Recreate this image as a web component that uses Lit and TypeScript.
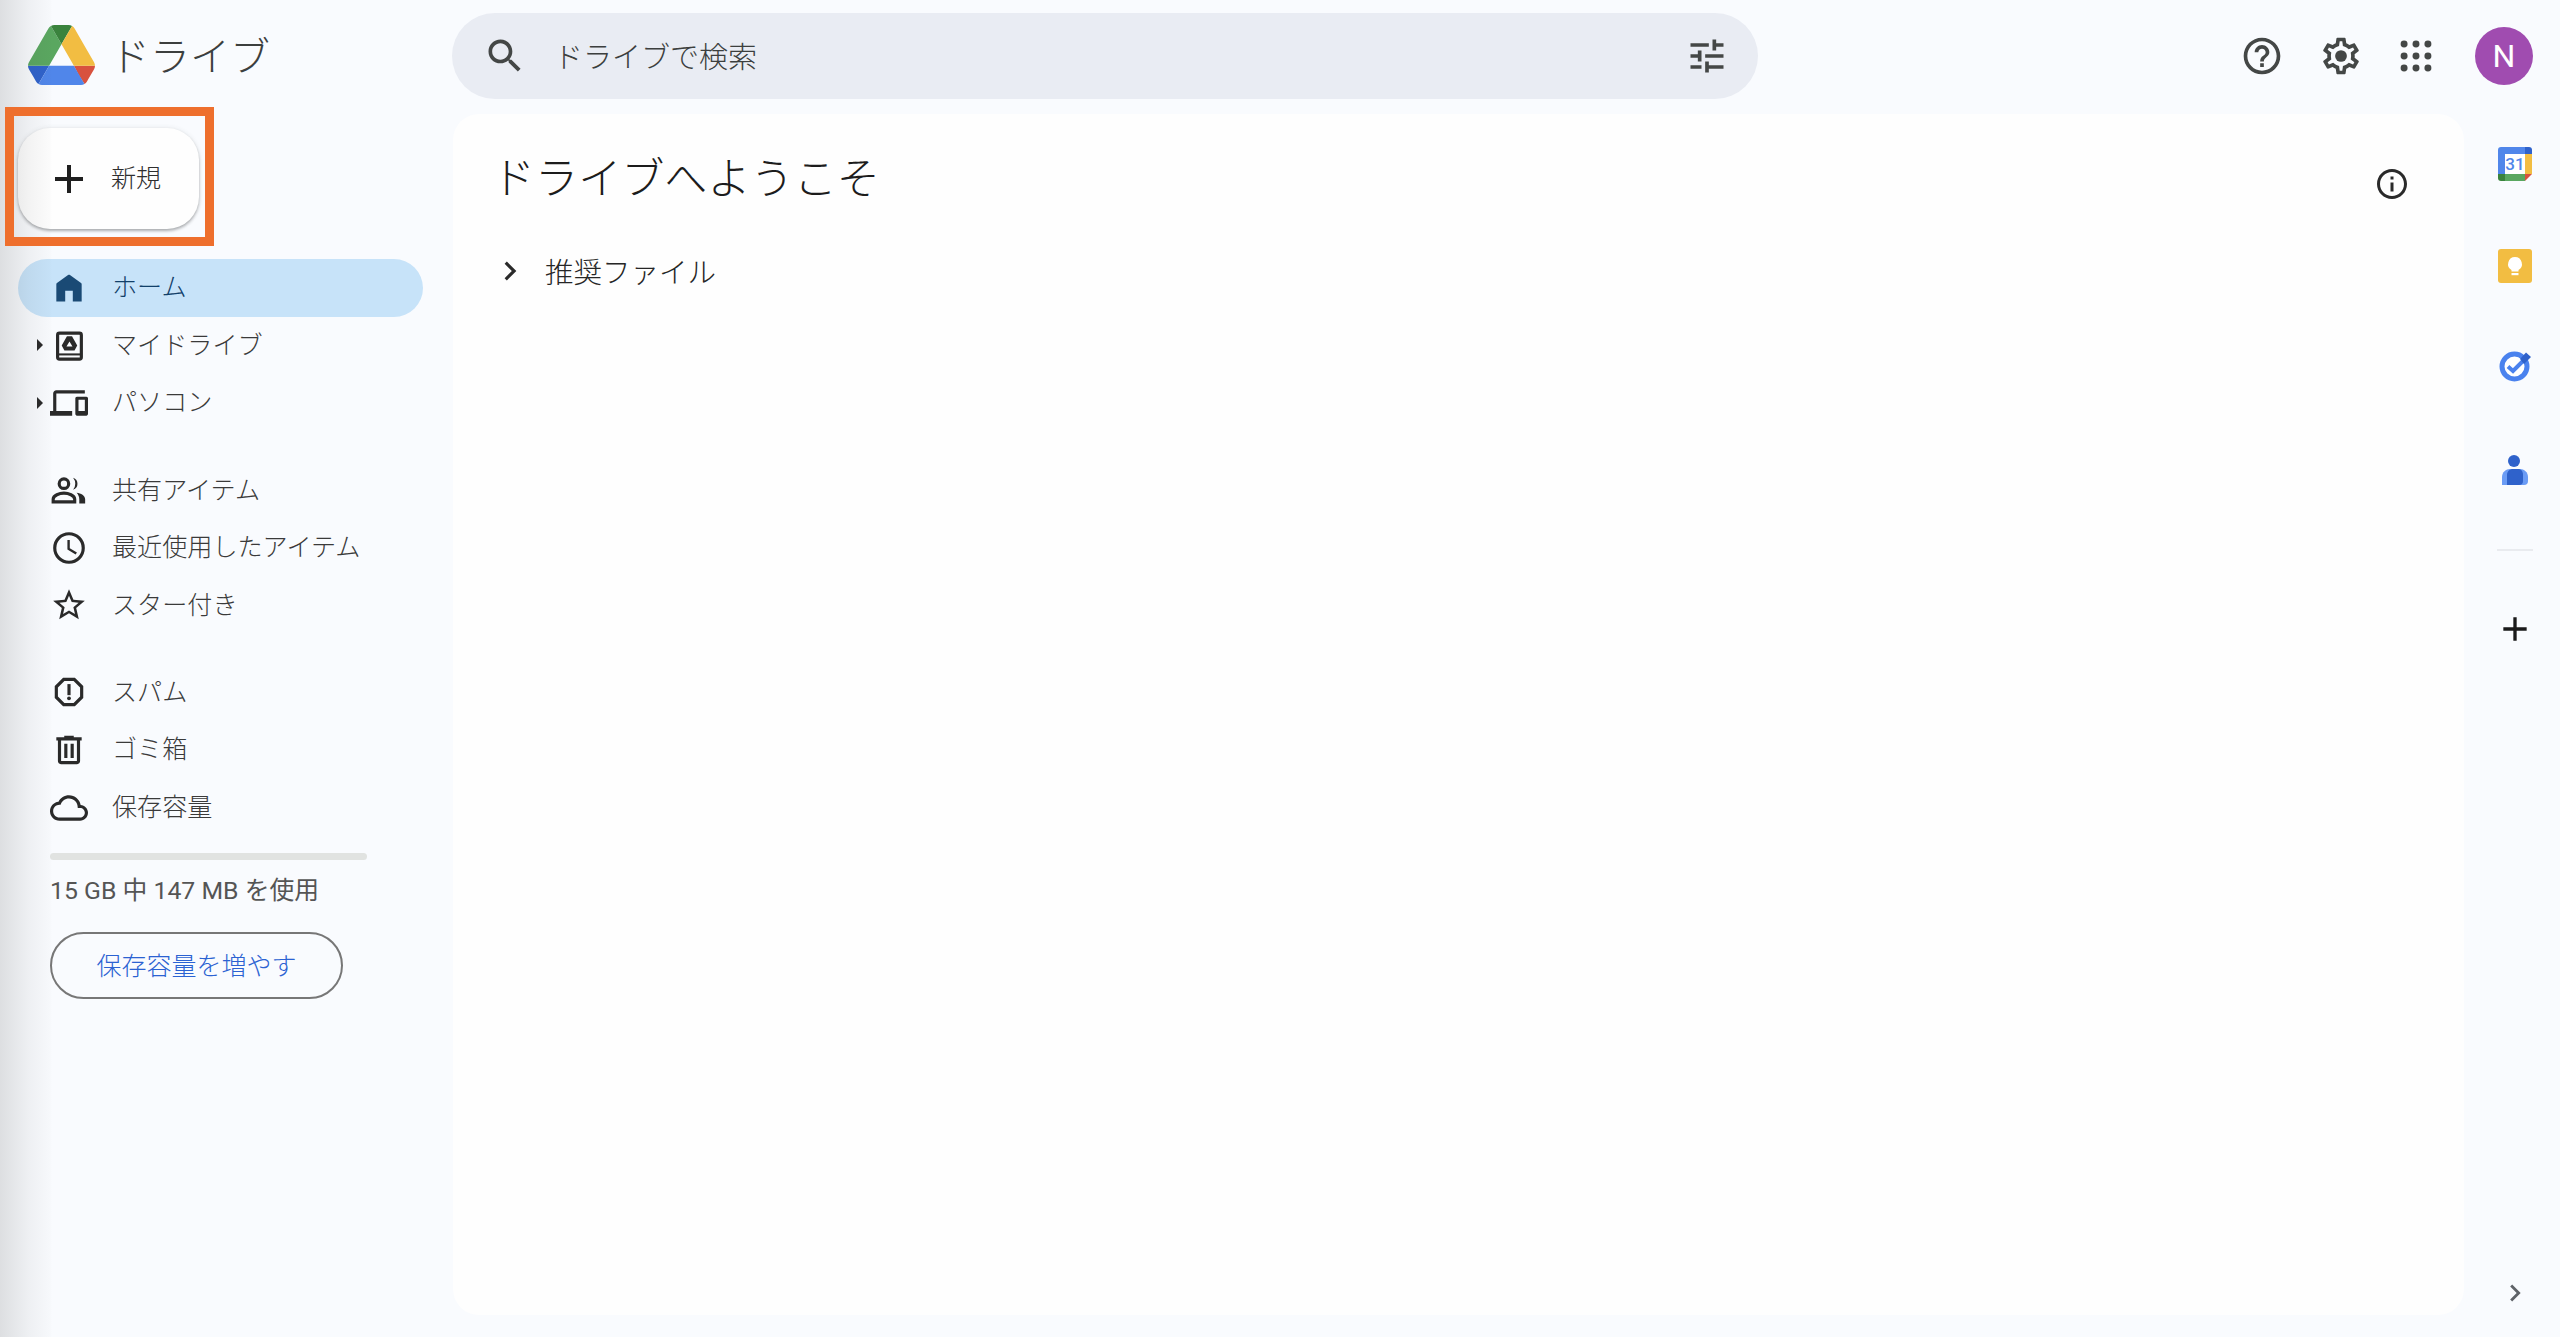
import { LitElement, html, css, svg } from "lit";
import { customElement } from "lit/decorators.js";

const ICONS: Record<string, unknown> = {
  home: svg`<path d="M4 20.500V9.600c0-.3.1-.6.4-.8l7-5c.4-.3.9-.3 1.200 0l7 5c.3.2.4.5.4.8v10.900h-5.600v-6.700H9.600v6.700z"/>`,
  drive: svg`<rect x="4.800" y="4.500" width="15" height="16.400" rx="1.200" fill="none" stroke="currentColor" stroke-width="2"/><path d="M5 17.300h14.500v1.300H5z"/><path fill-rule="evenodd" d="M10.700 6.500h3.200l3.300 5.800-1.700 3.100H9.100l-1.700-3.100zM12.300 9.800l-1.900 3.200h3.800z"/>`,
  devices: svg`<path d="M4 6h18V4H4c-1.100 0-2 .9-2 2v11H0v3h14v-3H4V6zm19 2h-6c-.55 0-1 .45-1 1v10c0 .55.45 1 1 1h6c.55 0 1-.45 1-1V9c0-.55-.45-1-1-1zm-1 9h-4v-7h4v7z"/>`,
  people: svg`<circle cx="8.800" cy="8" r="3" fill="none" stroke="currentColor" stroke-width="2"/><path d="M2 19.500v-1.700c0-2.400 4-3.800 6.800-3.800s6.800 1.400 6.800 3.800v1.700z" fill="none" stroke="currentColor" stroke-width="2"/><path d="M14.600 4.200a4 4 0 0 1 0 7.600 6 6 0 0 0 0-7.600zM16.800 13.700c2.800.4 5.400 1.700 5.400 4.100v2.700h-3.700v-2.700c0-1.700-.7-3-1.700-4.100z"/>`,
  clock: svg`<path d="M12 2a10 10 0 1 0 0 20 10 10 0 0 0 0-20zm0 18a8 8 0 1 1 0-16 8 8 0 0 1 0 16z"/><path d="M12.500 7H11v6l5.200 3.100.8-1.200-4.500-2.700z"/>`,
  star: svg`<path d="M22 9.240l-7.190-.62L12 2 9.190 8.630 2 9.240l5.460 4.730L5.820 21 12 17.270 18.180 21l-1.630-7.030L22 9.240zM12 15.400l-3.760 2.270 1-4.280-3.320-2.880 4.380-.38L12 6.100l1.710 4.040 4.380.38-3.320 2.880 1 4.280L12 15.400z"/>`,
  spam: svg`<path d="M15.730 3H8.270L3 8.270v7.460L8.270 21h7.460L21 15.730V8.270L15.730 3zM19 14.900L14.900 19H9.100L5 14.900V9.100L9.100 5h5.800L19 9.100v5.800z"/><circle cx="12" cy="16" r="1.200"/><path d="M11 7h2v7h-2z"/>`,
  trash: svg`<path d="M15 4V3H9v1H4v2h1v13c0 1.100.9 2 2 2h10c1.100 0 2-.9 2-2V6h1V4h-5zm2 15H7V6h10v13zM9 8h2v9H9zm4 0h2v9h-2z"/>`,
  cloud: svg`<path d="M19.350 10.040C18.670 6.590 15.640 4 12 4 9.110 4 6.600 5.640 5.350 8.040 2.340 8.360 0 10.910 0 14c0 3.310 2.690 6 6 6h13c2.760 0 5-2.240 5-5 0-2.640-2.050-4.780-4.650-4.960zM19 18H6c-2.210 0-4-1.790-4-4s1.790-4 4-4h.71C7.370 7.690 9.480 6 12 6c3.040 0 5.500 2.460 5.500 5.500v.5H19c1.660 0 3 1.340 3 3s-1.340 3-3 3z"/>`,
  search: svg`<path d="M15.500 14h-.79l-.28-.27C15.410 12.590 16 11.110 16 9.500 16 5.910 13.090 3 9.500 3S3 5.910 3 9.500 5.910 16 9.500 16c1.610 0 3.090-.59 4.230-1.570l.27.28v.79l5 4.990L20.490 19l-4.990-5zm-6 0C7.010 14 5 11.990 5 9.500S7.010 5 9.500 5 14 7.010 14 9.500 11.990 14 9.500 14z"/>`,
  tune: svg`<path d="M3 17v2h6v-2H3zM3 5v2h10V5H3zm10 16v-2h8v-2h-8v-2h-2v6h2zM7 9v2H3v2h4v2h2V9H7zm14 4v-2H11v2h10zm-6-4h2V7h4V5h-4V3h-2v6z"/>`,
  help: svg`<path d="M11 18h2v-2h-2v2zm1-16C6.480 2 2 6.480 2 12s4.480 10 10 10 10-4.480 10-10S17.520 2 12 2zm0 18c-4.410 0-8-3.590-8-8s3.590-8 8-8 8 3.590 8 8-3.590 8-8 8zm0-14c-2.210 0-4 1.790-4 4h2c0-1.100.9-2 2-2s2 .9 2 2c0 2-3 1.750-3 5h2c0-2.250 3-2.500 3-5 0-2.210-1.790-4-4-4z"/>`,
  settings: svg`<path d="M19.430 12.980c.04-.32.07-.64.07-.98 0-.34-.03-.66-.07-.98l2.110-1.650c.19-.15.24-.42.12-.64l-2-3.460c-.09-.16-.26-.25-.44-.25-.06 0-.12.01-.17.03l-2.490 1c-.52-.4-1.080-.73-1.690-.98l-.38-2.650C14.460 2.180 14.250 2 14 2h-4c-.25 0-.46.18-.49.42l-.38 2.650c-.61.25-1.170.59-1.690.98l-2.490-1c-.06-.02-.12-.03-.18-.03-.17 0-.34.09-.43.25l-2 3.460c-.13.22-.07.49.12.64l2.110 1.650c-.04.32-.07.65-.07.98 0 .33.03.66.07.98l-2.110 1.650c-.19.15-.24.42-.12.64l2 3.460c.09.16.26.25.44.25.06 0 .12-.01.17-.03l2.490-1c.52.4 1.080.73 1.690.98l.38 2.650c.03.24.24.42.49.42h4c.25 0 .46-.18.49-.42l.38-2.650c.61-.25 1.170-.59 1.690-.98l2.490 1c.06.02.12.03.18.03.17 0 .34-.09.43-.25l2-3.460c.12-.22.07-.49-.12-.64l-2.110-1.650zm-1.980-1.710c.04.31.05.52.05.73 0 .21-.02.43-.05.73l-.14 1.130.89.7 1.080.84-.7 1.210-1.270-.51-1.040-.42-.9.68c-.43.32-.84.56-1.250.73l-1.060.43-.16 1.130-.2 1.350h-1.400l-.19-1.350-.16-1.130-1.060-.43c-.43-.18-.83-.41-1.230-.71l-.91-.7-1.060.43-1.270.51-.7-1.210 1.080-.84.89-.7-.14-1.130c-.03-.31-.05-.54-.05-.74s.02-.43.05-.73l.14-1.130-.89-.7-1.080-.84.7-1.210 1.270.51 1.040.42.9-.68c.43-.32.84-.56 1.250-.73l1.060-.43.16-1.130.2-1.350h1.390l.19 1.350.16 1.130 1.060.43c.43.18.83.41 1.230.71l.91.7 1.060-.43 1.270-.51.7 1.210-1.070.85-.89.7.14 1.130z"/><circle cx="12" cy="12" r="3.200"/>`,
  apps: svg`<circle cx="5.500" cy="5.500" r="1.900"/><circle cx="12" cy="5.500" r="1.900"/><circle cx="18.500" cy="5.500" r="1.900"/><circle cx="5.500" cy="12" r="1.900"/><circle cx="12" cy="12" r="1.900"/><circle cx="18.500" cy="12" r="1.900"/><circle cx="5.500" cy="18.500" r="1.900"/><circle cx="12" cy="18.500" r="1.900"/><circle cx="18.500" cy="18.500" r="1.900"/>`,
  info: svg`<path d="M11 7h2v2h-2zm0 4h2v6h-2zm1-9C6.480 2 2 6.480 2 12s4.480 10 10 10 10-4.480 10-10S17.520 2 12 2zm0 18c-4.410 0-8-3.590-8-8s3.590-8 8-8 8 3.590 8 8-3.590 8-8 8z"/>`,
  chevron: svg`<path d="M8.590 16.590L13.170 12 8.590 7.410 10 6l6 6-6 6z"/>`,
  plus: svg`<path d="M19 13h-6v6h-2v-6H5v-2h6V5h2v6h6z"/>`,
};

const icon = (name: string, cls = "") =>
  html`<svg class="ic ${cls}" viewBox="0 0 24 24" fill="currentColor">${ICONS[name]}</svg>`;

const driveLogo = html`<svg class="logo" viewBox="0 0 87.3 78">
  <path d="m6.600 66.850 3.850 6.650c.8 1.400 1.950 2.500 3.300 3.300l13.750-23.800h-27.500c0 1.550.4 3.100 1.200 4.500z" fill="#2f62cb"/>
  <path d="m43.650 25-13.750-23.800c-1.350.8-2.500 1.900-3.300 3.300l-25.400 44a9.060 9.060 0 0 0 -1.200 4.500h27.500z" fill="#5aa760"/>
  <path d="m73.550 76.800c1.350-.8 2.500-1.900 3.300-3.300l1.600-2.750 7.650-13.250c.8-1.400 1.200-2.950 1.200-4.500h-27.502l5.852 11.500z" fill="#d8523f"/>
  <path d="m43.650 25 13.750-23.800c-1.350-.8-2.900-1.200-4.500-1.200h-18.500c-1.600 0-3.150.45-4.500 1.200z" fill="#3a833d"/>
  <path d="m59.800 53h-32.300l-13.750 23.800c1.350.8 2.900 1.200 4.500 1.200h50.800c1.600 0 3.150-.45 4.500-1.200z" fill="#5086ea"/>
  <path d="m73.400 26.500-12.700-22c-.8-1.400-1.950-2.500-3.300-3.300l-13.750 23.800 16.150 28h27.450c0-1.550-.4-3.100-1.200-4.500z" fill="#f2bd42"/>
</svg>`;

const calendar = html`<svg class="addon" viewBox="0 0 34 34">
  <path d="M3 0h25v7H7v20H0V3a3 3 0 0 1 3-3z" fill="#5086ea"/>
  <path d="M27 0h4a3 3 0 0 1 3 3v4h-7z" fill="#2f62cb"/>
  <path d="M27 7h7v20h-7z" fill="#f2bd42"/>
  <path d="M7 27h20v7H7z" fill="#5aa760"/>
  <path d="M0 27h7v7H3a3 3 0 0 1-3-3z" fill="#3a833d"/>
  <path d="M27 27h7l-7 7z" fill="#d8523f"/>
  <path d="M7 7h20v20H7z" fill="#fff"/>
  <text x="17" y="23" text-anchor="middle" class="cal">31</text>
</svg>`;

const keep = html`<svg class="addon" viewBox="0 0 34 34">
  <rect width="34" height="34" rx="3" fill="#f2bd42"/>
  <path d="M17 8a7 7 0 0 1 3.500 13v1.500h-7V21A7 7 0 0 1 17 8z" fill="#fff"/>
  <path d="M13.500 24h7v2.200h-7z" fill="#fff"/>
</svg>`;

const tasks = html`<svg class="addon" viewBox="0 0 34 34">
  <circle cx="16.500" cy="15.500" r="12.500" fill="#fff" stroke="#4a82ee" stroke-width="5"/>
  <path d="M10 15.500l5 4.500L26 9" fill="none" stroke="#4a82ee" stroke-width="4"/>
  <path d="M22 8l6-6.500 5 4.500-7 7z" fill="#2f62cb"/>
</svg>`;

const contacts = html`<svg class="addon" viewBox="0 0 34 34">
  <circle cx="16" cy="8" r="6" fill="#2f62cb"/>
  <path d="M4 32v-8c0-5 4-8 8-8h10c4 0 8 3 8 8v4a4 4 0 0 1-4 4z" fill="#6b9cf5"/>
  <path d="M9 32V22c0-4 3-6 6-6h5c3 0 5 2 5 6v6a4 4 0 0 1-4 4z" fill="#2f62cb"/>
</svg>`;

type Row = { label: string; ic: string; caret?: boolean; active?: boolean };
const sections: Row[][] = [
  [
    { label: "ホーム", ic: "home", active: true },
    { label: "マイドライブ", ic: "drive", caret: true },
    { label: "パソコン", ic: "devices", caret: true },
  ],
  [
    { label: "共有アイテム", ic: "people" },
    { label: "最近使用したアイテム", ic: "clock" },
    { label: "スター付き", ic: "star" },
  ],
  [
    { label: "スパム", ic: "spam" },
    { label: "ゴミ箱", ic: "trash" },
    { label: "保存容量", ic: "cloud" },
  ],
];

@customElement("app-root")
export class AppRoot extends LitElement {
  static styles = css`
    :host {
      display: block;
      position: relative;
      width: 2560px;
      height: 1337px;
      overflow: hidden;
      background: #f9fbfe;
      color: #3a3a3a;
      font-family: Roboto, "Noto Sans CJK JP", sans-serif;
      font-size: 25.100px;
      font-weight: 300;
    }
    .ic { width: 38px; height: 38px; display: block; flex: none; }
    .shade {
      position: absolute; left: 0; top: 0; bottom: 0; width: 52px; z-index: 1;
      pointer-events: none;
      background: linear-gradient(to right, rgba(60,60,60,.15), rgba(60,60,60,.06) 55%, rgba(60,60,60,.015) 95%, transparent);
    }
    .mark {
      position: absolute; left: 5px; top: 107px; width: 209px; height: 139px; z-index: 2;
      box-sizing: border-box; border: 9px solid #ee6f2d; pointer-events: none;
    }
    header { display: grid; grid-template-columns: 452px 1306px 1fr; height: 107px; }
    .brand { display: flex; align-items: center; padding: 2px 0 0 28px; gap: 15px; height: 107px; box-sizing: border-box; }
    .logo { width: 67px; height: 60px; display: block; }
    .brand span { font-size: 40px; color: #3c3f3e; line-height: 1; padding-top: 6px; }
    .search {
      margin-top: 13px; height: 86px; border-radius: 43px; background: #e9ecf3; color: #444746;
      display: flex; align-items: center; padding: 0 29px 0 31px; gap: 27px; box-sizing: border-box;
    }
    .search .ic { width: 44px; height: 44px; }
    .search span { flex: 1; font-size: 29px; color: #3c3f3e; padding-bottom: 2px; }
    .tools { display: flex; align-items: center; justify-content: flex-end; padding: 13px 27px 0 0; height: 86px; color: #444746; }
    .tools .ic { width: 44px; height: 44px; margin-right: 35px; }
    .tools .ic.last { margin-right: 37px; }
    .tools .ic.gear { margin-right: 31px; margin-left: 0; }
    .avatar {
      width: 58px; height: 58px; border-radius: 50%; background: #a04cb0; color: #fff;
      display: flex; align-items: center; justify-content: center; font-size: 32px; font-weight: 400;
    }
    .body { display: grid; grid-template-columns: 453px 2011px 96px; height: 1230px; }
    nav { padding-top: 21px; }
    .new {
      margin-left: 18px; width: 181px; height: 101px; border-radius: 32px; background: #fefefe;
      box-shadow: 0 2px 3px rgba(60,64,67,.38), 0 0 5px rgba(60,64,67,.1);
      display: flex; align-items: center; gap: 17px; padding-left: 32px; box-sizing: border-box; color: #1f1f1f;
    }
    .new .ic { width: 48px; height: 48px; margin-left: -5px; }
    .new span { color: #2f2f2f; margin-left: 1px; padding-bottom: 5px; }
    .sec { margin-top: 29.500px; }
    .sec.first { margin-top: 30px; }
    .row {
      display: flex; align-items: center; height: 57.600px; width: 405px; margin-left: 18px;
      border-radius: 29px; color: #3a3a3a;
    }
    .row.on { background: #c7e3f9; color: #12406a; }
    .row .ic { color: #2a2a2a; margin-left: 1px; margin-right: -1px; }
    .row.on .ic { color: #1a4a75; }
    .slot { width: 31px; flex: none; padding-left: 19px; box-sizing: border-box; display: flex; }
    .caret { width: 0; height: 0; border-left: 6px solid #2a2a2a; border-top: 6px solid transparent; border-bottom: 6px solid transparent; }
    .row span { margin-left: 25px; padding-bottom: 5px; }
    .bar { margin: 16.500px 0 0 50px; width: 317px; height: 7px; border-radius: 4px; background: #e1e3e1; }
    .used { margin: 16.500px 0 0 50px; line-height: 30px; color: #555; font-weight: 400; font-size: 24.800px; }
    .more {
      margin: 26px 0 0 50px; width: 293px; height: 67px; border-radius: 34px; border: 2px solid #777;
      box-sizing: border-box; display: flex; align-items: center; justify-content: center; color: #2b62d2; font-size: 25px;
      padding-bottom: 4px;
    }
    main { margin: 7px 0 22px; background: #fefefe; border-radius: 26px; }
    .head { display: flex; justify-content: space-between; padding: 41px 54px 0 39px; height: 50px; }
    .head h1 { margin: 0; font-weight: 300; font-size: 43.100px; line-height: 50px; color: #1c1c1c; }
    .head .ic { width: 36px; height: 36px; margin-top: 11px; color: #2a2a2a; }
    .rec { display: flex; align-items: center; margin: 40.500px 0 0 38px; height: 50px; gap: 16px; font-size: 28.500px; color: #262626; }
    .rec .ic { color: #2a2a2a; }
    .rail { display: flex; flex-direction: column; align-items: center; padding: 6px 0 27px 5px; }
    .slot2 { height: 102px; display: flex; align-items: center; justify-content: center; flex: none; }
    .addon { width: 34px; height: 34px; display: block; }
    .cal { font: 500 17px Roboto, sans-serif; fill: #5086ea; }
    .div { width: 36px; height: 2px; background: #e9ebef; margin: 27.500px 0 0; }
    .add { margin-top: 27.500px; color: #1a1a1a; }
    .add .ic { width: 40px; height: 40px; }
    .foot { margin-top: auto; color: #5f6368; }
    .foot .ic { width: 34px; height: 34px; }
  `;

  render() {
    return html`
      <div class="shade"></div>
      <div class="mark"></div>
      <header>
        <div class="brand">${driveLogo}<span>ドライブ</span></div>
        <div class="search">
          ${icon("search")}
          <span>ドライブで検索</span>
          ${icon("tune")}
        </div>
        <div class="tools">
          ${icon("help")}${icon("settings", "gear")}${icon("apps", "last")}
          <div class="avatar">N</div>
        </div>
      </header>
      <div class="body">
        <nav>
          <div class="new">${icon("plus")}<span>新規</span></div>
          ${sections.map(
            (sec, i) => html`<div class="sec ${i === 0 ? "first" : ""}">
              ${sec.map(
                (r) => html`<div class="row ${r.active ? "on" : ""}">
                  <div class="slot">${r.caret ? html`<div class="caret"></div>` : ""}</div>
                  ${icon(r.ic)}<span>${r.label}</span>
                </div>`
              )}
            </div>`
          )}
          <div class="bar"></div>
          <div class="used">15 GB 中 147 MB を使用</div>
          <div class="more">保存容量を増やす</div>
        </nav>
        <main>
          <div class="head"><h1>ドライブへようこそ</h1>${icon("info")}</div>
          <div class="rec">${icon("chevron")}<span>推奨ファイル</span></div>
        </main>
        <aside class="rail">
          <div class="slot2">${calendar}</div>
          <div class="slot2">${keep}</div>
          <div class="slot2">${tasks}</div>
          <div class="slot2">${contacts}</div>
          <div class="div"></div>
          <div class="slot2 add">${icon("plus")}</div>
          <div class="foot">${icon("chevron")}</div>
        </aside>
      </div>
    `;
  }
}
